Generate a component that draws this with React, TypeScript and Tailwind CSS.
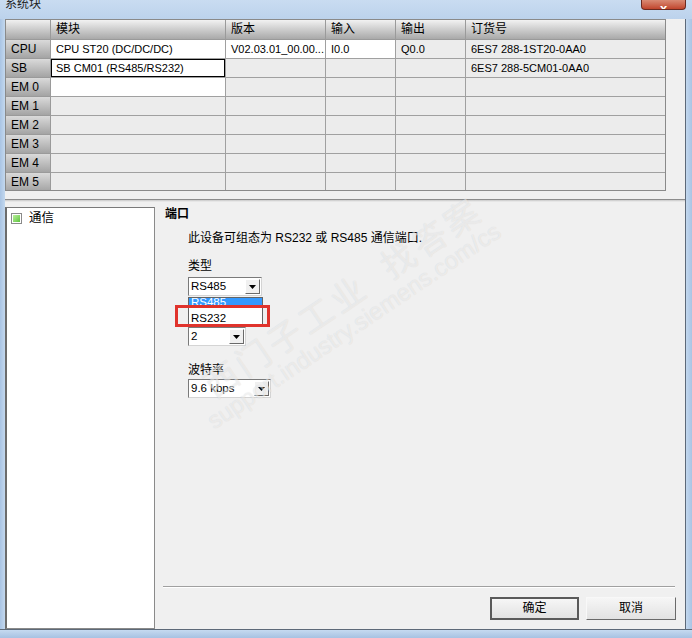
import React from "react";

type Row = { head: string; cells: string[]; white: boolean[] };

const columns = ["模块", "版本", "输入", "输出", "订货号"];

const rows: Row[] = [
  {
    head: "CPU",
    cells: ["CPU ST20 (DC/DC/DC)", "V02.03.01_00.00...", "I0.0", "Q0.0", "6ES7 288-1ST20-0AA0"],
    white: [true, true, true, false, false],
  },
  {
    head: "SB",
    cells: ["SB CM01 (RS485/RS232)", "", "", "", "6ES7 288-5CM01-0AA0"],
    white: [true, false, false, false, false],
  },
  { head: "EM 0", cells: ["", "", "", "", ""], white: [true, false, false, false, false] },
  { head: "EM 1", cells: ["", "", "", "", ""], white: [false, false, false, false, false] },
  { head: "EM 2", cells: ["", "", "", "", ""], white: [false, false, false, false, false] },
  { head: "EM 3", cells: ["", "", "", "", ""], white: [false, false, false, false, false] },
  { head: "EM 4", cells: ["", "", "", "", ""], white: [false, false, false, false, false] },
  { head: "EM 5", cells: ["", "", "", "", ""], white: [false, false, false, false, false] },
];

function TitleBar() {
  return (
    <div className="relative h-[19px] shrink-0 bg-gradient-to-b from-[#c9dcf1] to-[#bcd2ec]">
      <div className="pl-[5px] -mt-[3px] text-[12px] leading-[14px] text-[#1e1e1e]">系统块</div>
      <div className="absolute left-[641px] top-0 w-[45px] h-[10px] rounded-b-[4px] border border-t-0 border-[#6b2a20] bg-gradient-to-b from-[#d98a74] to-[#c0442c] flex items-end justify-center overflow-hidden">
        <span className="text-white text-[13px] font-bold leading-[13px] -mb-[6px]">x</span>
      </div>
    </div>
  );
}

function SystemTable() {
  return (
    <div className="w-[661px] h-[172px] border border-[#8a8a8a] bg-[#ececec] overflow-hidden">
      <div className="grid grid-cols-[45px_175px_100px_70px_70px_200px]">
        <div className="h-[20px] border-r border-b border-[#9a9a9a] bg-gradient-to-b from-[#f0f0f0] to-[#a8a8a8]" />
        {columns.map((c) => (
          <div
            key={c}
            className="h-[20px] border-r border-b border-[#9a9a9a] bg-gradient-to-b from-[#f2f2f2] to-[#a9a9a9] pl-[5px] text-[12px] leading-[19px]"
          >
            {c}
          </div>
        ))}
        {rows.map((r) => (
          <React.Fragment key={r.head}>
            <div className="h-[19px] border-r border-b border-[#9a9a9a] bg-gradient-to-b from-[#dadada] to-[#a4a4a4] pl-[5px] text-[12px] leading-[18px]">
              {r.head}
            </div>
            {r.cells.map((c, i) => {
              const selected = r.head === "SB" && i === 0;
              return (
                <div
                  key={i}
                  className={`h-[19px] border-r border-b border-[#a0a0a0] pl-[5px] leading-[18px] whitespace-nowrap overflow-hidden ${
                    r.white[i] ? "bg-white" : "bg-[#ececec]"
                  } ${selected ? "shadow-[inset_0_0_0_1px_#000]" : ""}`}
                >
                  {c}
                </div>
              );
            })}
          </React.Fragment>
        ))}
      </div>
    </div>
  );
}

function Arrow() {
  return (
    <svg width="7" height="4" viewBox="0 0 7 4">
      <path d="M0 0h7L3.5 4z" fill="#000" />
    </svg>
  );
}

function Combo({ value, className }: { value: string; className: string }) {
  return (
    <div
      className={`${className} h-[19px] flex items-center bg-white border border-t-[#7a7a7a] border-l-[#7a7a7a] border-r-[#d4d4d4] border-b-[#d4d4d4]`}
    >
      <span className="flex-1 pl-[2px] text-[11.5px] leading-[17px] whitespace-nowrap">{value}</span>
      <span className="w-[15px] h-[15px] mr-px flex items-center justify-center bg-[#f0f0f0] border border-t-[#ffffff] border-l-[#ffffff] border-r-[#6a6a6a] border-b-[#6a6a6a]">
        <Arrow />
      </span>
    </div>
  );
}

function TreePanel() {
  return (
    <div className="w-[150px] mt-[5px] bg-white border border-[#8a8a8a] border-l-2 border-l-[#6c6c6c] border-t-[#7a7a7a]">
      <div className="flex items-center gap-[7px] pl-[4px] pt-[3px]">
        <span className="w-[11px] h-[11px] border border-[#8a8a8a] bg-white p-px">
          <span className="block w-full h-full bg-gradient-to-br from-[#b8f09a] to-[#5cc23a]" />
        </span>
        <span className="text-[12.5px] leading-[14px]">通信</span>
      </div>
    </div>
  );
}

function PortPanel() {
  return (
    <div className="relative flex-1 flex flex-col">
      <div className="pl-[10px] pt-[5px] text-[12px]">
        <div className="font-bold leading-[14px]">端口</div>
        <div className="ml-[23px] mt-[9px] leading-[16px]">此设备可组态为 RS232 或 RS485 通信端口.</div>
        <div className="ml-[23px] mt-[12px] leading-[16px]">类型</div>
        <Combo value="RS485" className="ml-[23px] mt-[3px] w-[74px]" />
        <Combo value="2" className="ml-[23px] mt-[31px] w-[58px]" />
        <div className="ml-[23px] mt-[16px] leading-[16px]">波特率</div>
        <Combo value="9.6 kbps" className="ml-[23px] mt-px w-[83px]" />
      </div>

      <div className="flex-1" />
      <div className="ml-[8px] mr-[10px] h-[2px] border-t border-[#a0a0a0] border-b border-b-white" />
      <div className="mt-[9px] mb-[9px] pr-[9px] flex justify-end gap-[7px] text-[12px]">
        <button className="w-[89px] h-[23px] border-2 border-[#5a5a5a] bg-gradient-to-b from-[#f6f6f6] to-[#e2e2e2] leading-[19px]">
          确定
        </button>
        <button className="w-[90px] h-[23px] border border-t-[#f8f8f8] border-l-[#f8f8f8] border-r-[#6a6a6a] border-b-[#6a6a6a] bg-gradient-to-b from-[#f6f6f6] to-[#e2e2e2] leading-[21px]">
          取消
        </button>
      </div>

      {/* open dropdown list */}
      <div className="absolute left-[33px] top-[95px] w-[75px] h-[30px] bg-white border border-[#646464] overflow-hidden z-10 text-[11.5px]">
        <div className="h-[10px] bg-[#3399ff] text-white pl-[2px] leading-[20px] overflow-hidden">
          <div className="-mt-[6px]">RS485</div>
        </div>
        <div className="pl-[2px] pt-[3px] leading-[14px]">RS232</div>
      </div>
      {/* red annotation */}
      <div className="absolute left-[20px] top-[103px] w-[95px] h-[22px] border-[3px] border-[#e0332c] z-20" />
    </div>
  );
}

function Watermark() {
  return (
    <div className="pointer-events-none absolute inset-0 z-30 text-white/50 [text-shadow:0_0_1px_rgba(0,0,0,0.12)]">
      <span className="absolute left-[342px] top-[296px] -translate-x-1/2 -translate-y-1/2 rotate-[-34deg] whitespace-nowrap text-[34px] tracking-[4px] font-['Noto_Sans_CJK_SC',sans-serif]">
        西门子工业&nbsp;&nbsp;找答案
      </span>
      <span className="absolute left-[354px] top-[326px] -translate-x-1/2 -translate-y-1/2 rotate-[-34deg] whitespace-nowrap text-[24px] font-['Liberation_Sans',sans-serif]">
        support.industry.siemens.com/cs
      </span>
    </div>
  );
}

export default function App() {
  return (
    <div className="relative w-[692px] h-[638px] overflow-hidden flex flex-col bg-[#bcd3ec] text-[11px] text-black font-['Liberation_Sans','Noto_Sans_CJK_SC',sans-serif]">
      <TitleBar />
      <div className="flex flex-1 min-h-0">
        <div className="w-[5px] bg-gradient-to-r from-[#a9c4e4] to-[#c3d8ee]" />
        <div className="w-[681px] bg-[#f0f0f0] border-r border-[#5d6978] flex flex-col">
          <div className="flex shrink-0">
            <SystemTable />
          </div>
          <div className="h-[8px] shrink-0" />
          <div className="h-[3px] shrink-0 border-t border-[#8c8c8c] bg-gradient-to-b from-[#c8c8c8] to-[#f0f0f0]" />
          <div className="flex flex-1 min-h-0">
            <TreePanel />
            <PortPanel />
          </div>
        </div>
        <div className="w-[6px] bg-gradient-to-r from-[#c3d8ee] to-[#a9c4e4]" />
      </div>
      <div className="h-[9px] shrink-0 border-t border-[#5d6978] bg-gradient-to-b from-[#c6daf0] to-[#a7c2e2]" />
      <Watermark />
    </div>
  );
}
